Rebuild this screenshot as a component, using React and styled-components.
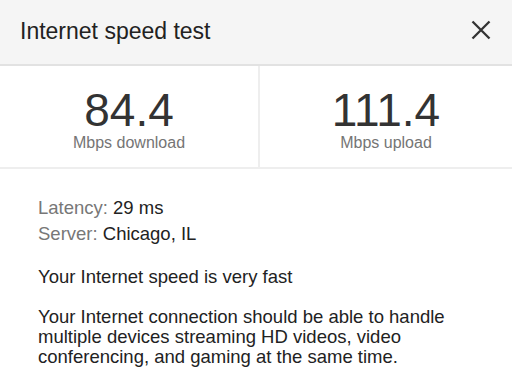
import React from "react";
import styled, { createGlobalStyle } from "styled-components";

const Global = createGlobalStyle`
  html, body {
    margin: 0;
    padding: 0;
    background: #fff;
    font-family: "Liberation Sans", Arial, sans-serif;
  }
`;

const stats = [
  { value: "84.4", label: "Mbps download" },
  { value: "111.4", label: "Mbps upload" },
];

const App = () => {
  return (
    <S.Panel>
      <Global />
      <S.Header>
        <S.Title>Internet speed test</S.Title>
        <S.Close aria-label="close">
          <svg width="24" height="24" viewBox="0 0 24 24">
            <path d="M3.5 3.5 L20.5 20.5 M20.5 3.5 L3.5 20.5" stroke="#333" strokeWidth="2.3" fill="none" />
          </svg>
        </S.Close>
      </S.Header>
      <S.Stats>
        {stats.map((s) => (
          <S.Stat key={s.label}>
            <S.Value>{s.value}</S.Value>
            <S.Label>{s.label}</S.Label>
          </S.Stat>
        ))}
      </S.Stats>
      <S.Body>
        <S.Info>
          <S.Line><S.Key>Latency:</S.Key> 29 ms</S.Line>
          <S.Line><S.Key>Server:</S.Key> Chicago, IL</S.Line>
        </S.Info>
        <S.Text>Your Internet speed is very fast</S.Text>
        <S.Text>
          Your Internet connection should be able to handle multiple devices
          streaming HD videos, video conferencing, and gaming at the same time.
        </S.Text>
      </S.Body>
    </S.Panel>
  );
};

const S = {
  Panel: styled.div`
    width: 512px;
    height: 375px;
    overflow: hidden;
    background: #fff;
  `,
  Header: styled.div`
    height: 64px;
    background: #f5f5f5;
    border-bottom: 2px solid #e2e2e2;
    display: flex;
    align-items: center;
    justify-content: space-between;
    padding: 0 20px;
    box-sizing: content-box;
  `,
  Title: styled.h1`
    margin: 0 0 2px;
    font-size: 23px;
    font-weight: 400;
    color: #222;
  `,
  Close: styled.button`
    border: none;
    background: none;
    padding: 0;
    margin: 0 -1px 4px 0;
    display: flex;
    cursor: pointer;
  `,
  Stats: styled.div`
    display: grid;
    grid-template-columns: 258px 1fr;
    height: 101px;
    border-bottom: 2px solid #eeeeee;
  `,
  Stat: styled.div`
    display: flex;
    flex-direction: column;
    align-items: center;
    padding-top: 20px;
    & + & {
      border-left: 2px solid #eeeeee;
    }
  `,
  Value: styled.div`
    font-size: 46px;
    line-height: 49px;
    color: #333;
  `,
  Label: styled.div`
    font-size: 16px;
    line-height: 18px;
    margin-top: -1px;
    color: #757575;
  `,
  Body: styled.div`
    padding: 26px 38px 0;
    color: #222;
    font-size: 18.5px;
  `,
  Info: styled.div`
    margin-bottom: 20px;
  `,
  Line: styled.div`
    line-height: 26px;
  `,
  Key: styled.span`
    color: #777;
  `,
  Text: styled.p`
    margin: 0 0 20px;
    line-height: 20px;
  `,
};

export default App;
